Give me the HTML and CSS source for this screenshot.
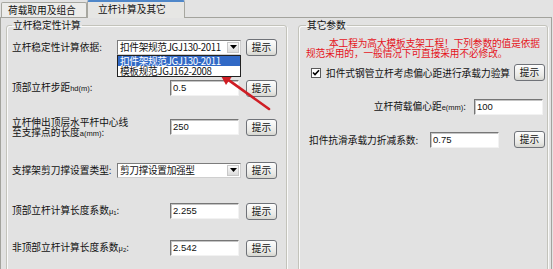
FILE: index.html
```html
<!DOCTYPE html>
<html lang="zh">
<head>
<meta charset="utf-8">
<link rel="stylesheet" href="styles.css">
</head>
<body>
<div class="tabs">
  <div class="tab">荷载取用及组合</div>
  <div class="tab active">立杆计算及其它</div>
</div>
<div class="page">
  <fieldset class="group left">
    <legend>立杆稳定性计算</legend>
    <div class="row">
      <span class="label">立杆稳定性计算依据:</span>
      <span class="cell">
        <span class="combo"><span class="ctext">扣件架规范JGJ130-2011</span><span class="drop"><svg width="7" height="4" viewBox="0 0 7 4"><path d="M0 0h7L3.5 4z" fill="#000"/></svg></span>
          <span class="list">
            <span class="item sel">扣件架规范JGJ130-2011</span>
            <span class="item">模板规范JGJ162-2008</span>
          </span>
        </span>
      </span>
      <span class="btn">提示</span>
    </div>
    <div class="row r2">
      <span class="label">顶部立杆步距<small>hd(m)</small>:</span>
      <span class="cell"><span class="input">0.5</span></span>
      <span class="btn">提示</span>
    </div>
    <div class="row r3">
      <span class="label two"><span class="ln">立杆伸出顶层水平杆中心线</span><span class="ln">至支撑点的长度<small>a(mm)</small>:</span></span>
      <span class="cell"><span class="input">250</span></span>
      <span class="btn">提示</span>
    </div>
    <div class="row r4">
      <span class="label">支撑架剪刀撑设置类型:</span>
      <span class="cell"><span class="combo"><span class="ctext">剪刀撑设置加强型</span><span class="drop"><svg width="7" height="4" viewBox="0 0 7 4"><path d="M0 0h7L3.5 4z" fill="#000"/></svg></span></span></span>
      <span class="btn">提示</span>
    </div>
    <div class="row r5">
      <span class="label">顶部立杆计算长度系数<small class="mu">μ<sub>1</sub></small>:</span>
      <span class="cell"><span class="input">2.255</span></span>
      <span class="btn">提示</span>
    </div>
    <div class="row r6">
      <span class="label">非顶部立杆计算长度系数<small class="mu">μ<sub>2</sub></small>:</span>
      <span class="cell"><span class="input">2.542</span></span>
      <span class="btn">提示</span>
    </div>
  </fieldset>
  <fieldset class="group right">
    <legend>其它参数</legend>
    <p class="note"><span class="ln">本工程为高大模板支架工程！下列参数的值是依据</span><span class="ln">规范采用的，一般情况下可直接采用不必修改。</span></p>
    <div class="rrow check-row">
      <span class="check"><svg width="8" height="8" viewBox="0 0 8 8"><path d="M1 3.5l2 2L7 1.2" fill="none" stroke="#000" stroke-width="1.6"/></svg></span>
      <span class="clabel">扣件式钢管立杆考虑偏心距进行承载力验算</span>
      <span class="btn push">提示</span>
    </div>
    <div class="rrow e-row">
      <span class="rlabel">立杆荷载偏心距<small>e(mm)</small>:</span>
      <span class="input">100</span>
    </div>
    <div class="rrow k-row">
      <span class="klabel">扣件抗滑承载力折减系数:</span>
      <span class="input">0.75</span>
      <span class="btn push">提示</span>
    </div>
  </fieldset>
</div>
<svg class="arrow" width="553" height="269" viewBox="0 0 553 269">
  <line x1="229" y1="80.4" x2="269" y2="109" stroke="#cf1d24" stroke-width="2.6" stroke-linecap="round"/>
  <polygon points="220,74 232.5,75.8 226,85" fill="#cf1d24"/>
</svg>
</body>
</html>
```
FILE: styles.css
```css
* { box-sizing: border-box; }
html, body { margin: 0; padding: 0; }
body {
  width: 553px;
  height: 269px;
  overflow: hidden;
  background: #e3e3e3;
  font-family: "Noto Sans CJK SC", "Liberation Sans", sans-serif;
  font-size: 9.7px;
  line-height: 12px;
  color: #111;
  position: relative;
}
.tabs {
  display: flex;
  align-items: flex-end;
  height: 17px;
  padding-left: 1px;
}
.tab {
  width: 86px;
  height: 15px;
  padding-left: 6px;
  border: 1px solid #a7a7a0;
  border-bottom: none;
  border-radius: 2px 2px 0 0;
  background: #ececea;
  line-height: 14px;
  white-space: nowrap;
}
.tab.active {
  width: 98px;
  height: 18px;
  padding-left: 10px;
  margin-bottom: -1px;
  border-top: 2px solid #4f87c9;
  background: #e6e6e4;
  line-height: 15px;
  position: relative;
  z-index: 1;
}
.page {
  display: flex;
  gap: 11px;
  height: 260px;
  padding: 1px 0 0 5px;
  border: 1px solid #a3a39d;
  border-bottom: none;
  width: 552px;
  background: #e2e2e2;
}
.group {
  margin: 0;
  min-width: 0;
  height: 300px;
  border: 1px solid #c3c3bb;
  border-radius: 3px;
  box-shadow: inset 1px 1px 0 #fafafa, 1px 1px 0 #fafafa;
}
.group legend {
  padding: 0 1px;
  line-height: 12px;
}
.left {
  width: 281px;
  padding: 7px 5px 0 5px;
}
.right {
  width: 250px;
  padding: 7px 2px 0 7px;
}
.row {
  display: flex;
  align-items: center;
  height: 18px;
  white-space: nowrap;
}
.r2 { margin-top: 23px; }
.r3 { margin-top: 20px; height: 20px; }
.r4 { margin-top: 24px; }
.r5 { margin-top: 23px; }
.r6 { margin-top: 19px; }
.label {
  width: 105px;
  flex: none;
}
.label.two {
  display: flex;
  flex-direction: column;
  gap: 0;
}
.ln { display: block; height: 10px; line-height: 10px; }
.label small, .rlabel small {
  font-size: 7.5px;
  font-family: "Liberation Sans", sans-serif;
}
.mu sub { font-size: 6px; vertical-align: -1px; }
.cell {
  width: 124px;
  flex: none;
  display: flex;
  justify-content: flex-end;
  margin-right: 5px;
}
.combo {
  position: relative;
  width: 124px;
  height: 15px;
  padding-left: 2px;
  background: #fff;
  border: 1px solid #7c7c7c;
  border-right-color: #cfcfcf;
  border-bottom-color: #cfcfcf;
  line-height: 13px;
  display: flex;
  align-items: center;
  justify-content: space-between;
}
.ctext, .item { letter-spacing: -0.35px; }
.drop {
  width: 12px;
  height: 11px;
  margin-right: 1px;
  flex: none;
  border: 1px solid #c8c8c8;
  background: linear-gradient(#fbfbfb, #dcdcdc);
  display: flex;
  align-items: center;
  justify-content: center;
}
.list {
  position: absolute;
  left: -1px;
  top: 14px;
  width: 124px;
  border: 1px solid #222;
  background: #fff;
  display: flex;
  flex-direction: column;
  z-index: 2;
}
.item {
  height: 10px;
  line-height: 10px;
  padding-left: 2px;
}
.item.sel {
  background: #3169c6;
  color: #fff;
}
.input {
  width: 69px;
  height: 16px;
  margin-right: 2px;
  padding-left: 2px;
  background: #fff;
  border: 1px solid #f2f2f2;
  border-top-color: #767676;
  border-left-color: #767676;
  box-shadow: inset 1px 1px 0 #c4c4c4;
  line-height: 14px;
  font-family: "Liberation Sans", sans-serif;
  font-size: 9.5px;
}
.btn {
  width: 31px;
  height: 17px;
  flex: none;
  border: 1px solid #6f7278;
  border-radius: 3px;
  background: linear-gradient(#fdfdfd, #e9e9e6 70%, #d6d6d0);
  text-align: center;
  line-height: 15px;
}
.note {
  margin: 0;
  color: #e5141c;
  letter-spacing: -0.1px;
}
.note .ln:first-child { padding-left: 23px; }
.rrow {
  display: flex;
  align-items: center;
  height: 17px;
  white-space: nowrap;
}
.check-row { margin-top: 6px; }
.e-row { margin-top: 17px; justify-content: flex-end; }
.k-row { margin-top: 16px; }
.check {
  width: 10px;
  height: 10px;
  margin-left: 5px;
  margin-right: 5px;
  background: #fff;
  border: 1px solid #5a5a5a;
  display: flex;
  align-items: center;
  justify-content: center;
}
.push { margin-left: auto; }
.rlabel { margin-right: 8px; }
.klabel { width: 124px; padding-left: 3px; }
.k-row .input { margin-right: 0; }
.arrow {
  position: absolute;
  left: 0;
  top: 0;
  pointer-events: none;
}
```
